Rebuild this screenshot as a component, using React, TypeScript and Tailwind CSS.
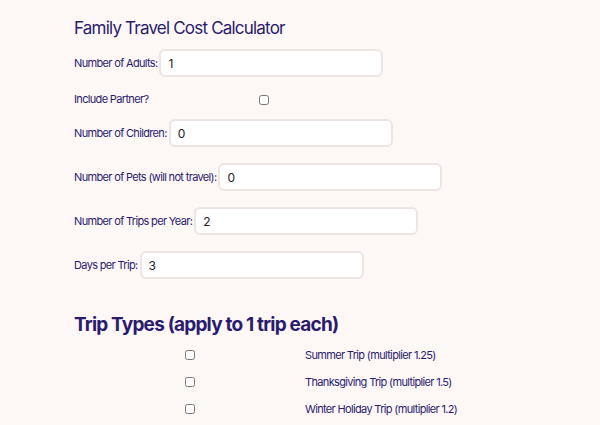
export default function App() {
  const fields = [
    { label: "Number of Pets (will not travel):", value: "0" },
    { label: "Number of Trips per Year:", value: "2" },
    { label: "Days per Trip:", value: "3" },
  ]
  const trips = [
    "Summer Trip (multiplier 1.25)",
    "Thanksgiving Trip (multiplier 1.5)",
    "Winter Holiday Trip (multiplier 1.2)",
  ]
  const inputCls =
    "h-[28px] w-[224px] rounded-[6px] border-2 border-[#ede5e4] bg-white px-[7px] text-[12px] tracking-normal text-[#222] outline-none"
  return (
    <div className="min-h-screen w-full bg-[#fdf8f6] px-[74px] pt-[16px] text-[#2a1b6e] font-['Inter',sans-serif] tracking-[-0.05em]">
      <h1 className="text-[17px] font-normal leading-[24px]">Family Travel Cost Calculator</h1>

      <div className="mt-[9px] flex items-center text-[11px] tracking-[-0.06em]">
        <label className="mr-[2px]">Number of Adults:</label>
        <input defaultValue="1" className={inputCls} />
      </div>

      <div className="mt-[15px] flex h-[15px] items-center text-[11px] tracking-[-0.06em]">
        <label>Include Partner?</label>
        <div className="ml-[4px] flex w-[224px] justify-center">
          <input type="checkbox" className="h-[10px] w-[10px]" />
        </div>
      </div>

      <div className="mt-[12px] flex items-center text-[11px] tracking-[-0.06em]">
        <label className="mr-[2px]">Number of Children:</label>
        <input defaultValue="0" className={inputCls} />
      </div>

      {fields.map((f) => (
        <div key={f.label} className="mt-[16px] flex items-center text-[11px] tracking-[-0.06em]">
          <label className="mr-[2px]">{f.label}</label>
          <input defaultValue={f.value} className={inputCls} />
        </div>
      ))}

      <h2 className="mt-[30px] text-[19px] font-bold leading-[32px]">Trip Types (apply to 1 trip each)</h2>

      <div className="mt-[7px] flex flex-col gap-[13px]">
        {trips.map((t) => (
          <label key={t} className="flex h-[14px] items-center text-[11px] tracking-[-0.06em]">
            <span className="ml-[4px] flex w-[224px] justify-center">
              <input type="checkbox" className="h-[10px] w-[10px]" />
            </span>
            <span className="ml-[3px]">{t}</span>
          </label>
        ))}
      </div>
    </div>
  )
}
